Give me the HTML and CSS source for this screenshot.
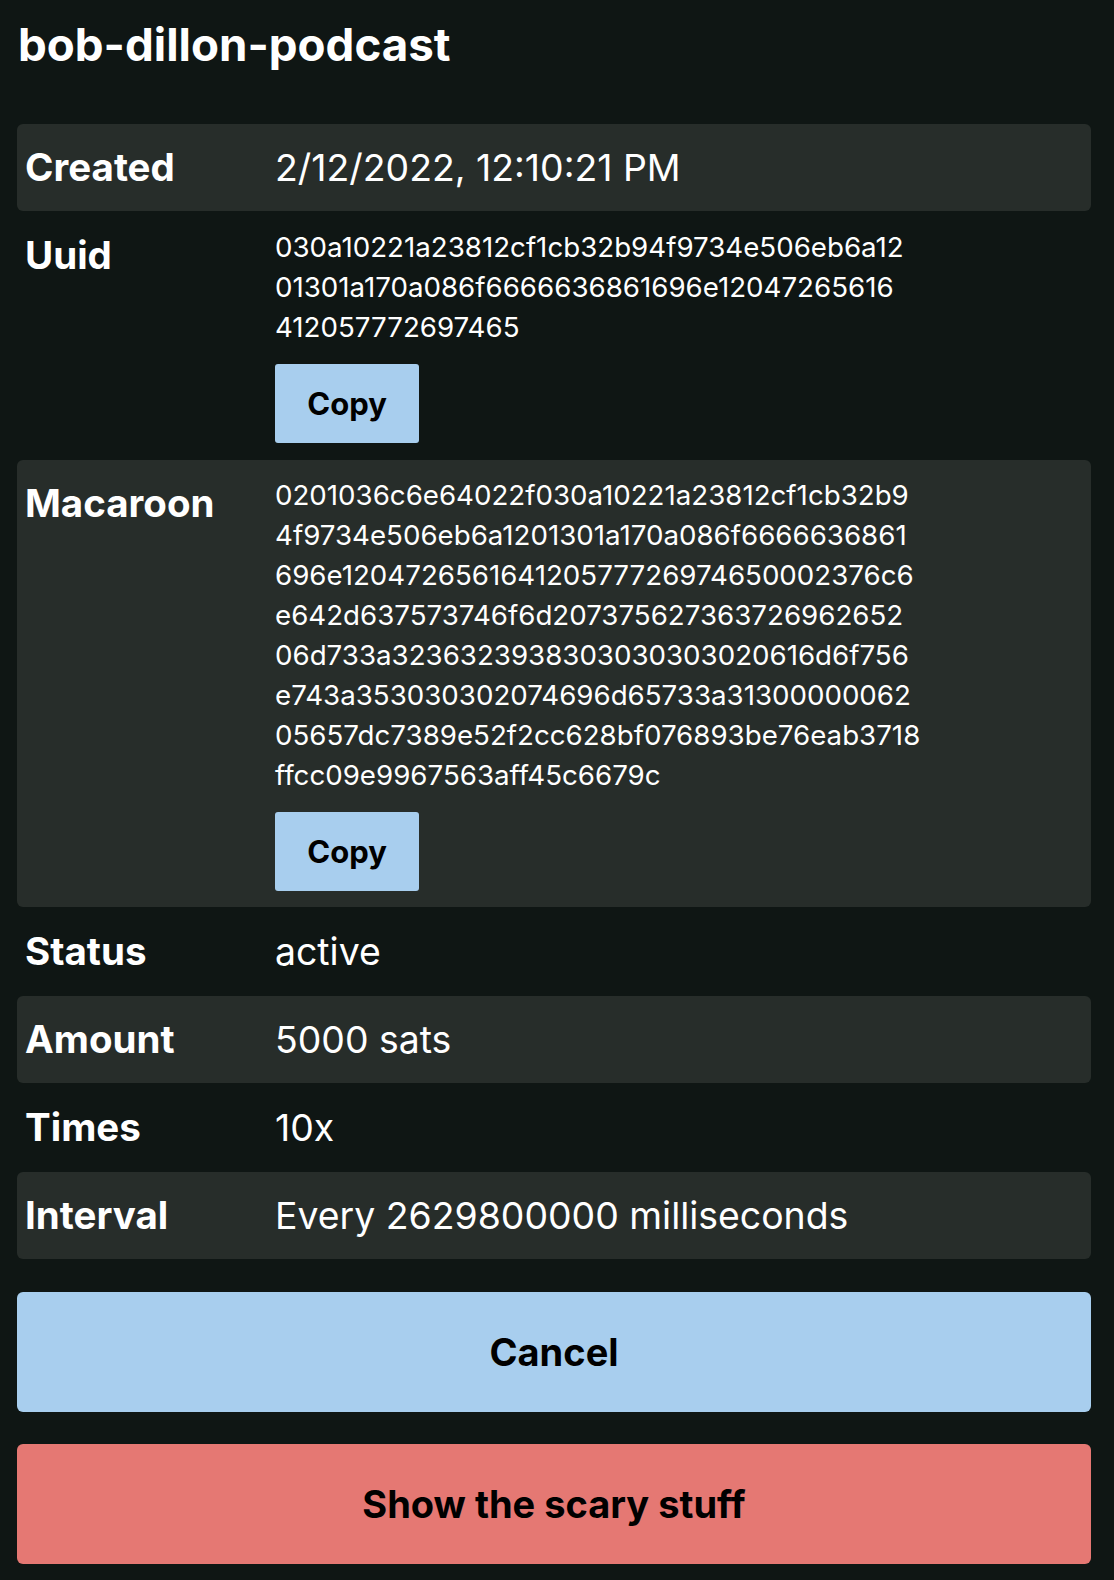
FILE: index.html
```html
<!DOCTYPE html>
<html lang="en">
<head>
<meta charset="utf-8">
<title>bob-dillon-podcast</title>
<link rel="stylesheet" href="styles.css">
</head>
<body>
<main class="page">
  <h1 class="title">bob-dillon-podcast</h1>
  <div class="details">
    <div class="row striped">
      <div class="label">Created</div>
      <div class="value">2/12/2022, 12:10:21 PM</div>
    </div>
    <div class="row">
      <div class="label">Uuid</div>
      <div class="value">
        <div class="hex"><span>030a10221a23812cf1cb32b94f9734e506eb6a12</span><span>01301a170a086f6666636861696e12047265616</span><span>412057772697465</span></div>
        <button class="copy" type="button">Copy</button>
      </div>
    </div>
    <div class="row striped">
      <div class="label">Macaroon</div>
      <div class="value">
        <div class="hex"><span>0201036c6e64022f030a10221a23812cf1cb32b9</span><span>4f9734e506eb6a1201301a170a086f6666636861</span><span>696e120472656164120577726974650002376c6</span><span>e642d637573746f6d207375627363726962652</span><span>06d733a3236323938303030303020616d6f756</span><span>e743a353030302074696d65733a31300000062</span><span>05657dc7389e52f2cc628bf076893be76eab3718</span><span>ffcc09e9967563aff45c6679c</span></div>
        <button class="copy" type="button">Copy</button>
      </div>
    </div>
    <div class="row">
      <div class="label">Status</div>
      <div class="value">active</div>
    </div>
    <div class="row striped">
      <div class="label">Amount</div>
      <div class="value">5000 sats</div>
    </div>
    <div class="row">
      <div class="label">Times</div>
      <div class="value">10x</div>
    </div>
    <div class="row striped">
      <div class="label">Interval</div>
      <div class="value">Every 2629800000 milliseconds</div>
    </div>
  </div>
  <button class="action cancel" type="button">Cancel</button>
  <button class="action scary" type="button">Show the scary stuff</button>
</main>
</body>
</html>
```
FILE: styles.css
```css
html, body {
  margin: 0;
  padding: 0;
  background: #0f1614;
}

body {
  font-family: Inter, "Liberation Sans", sans-serif;
  color: #ffffff;
}

.page {
  width: 1074px;
  margin-left: 17px;
  padding: 17px 0 16px;
}

.title {
  margin: 0 0 51px;
  font-size: 45.7px;
  line-height: 56px;
  font-weight: 700;
  padding-left: 1px;
}

.details {
  display: flex;
  flex-direction: column;
  gap: 1px;
}

.row {
  display: grid;
  grid-template-columns: 250px 1fr;
  align-items: start;
  padding: 16px 8px;
  border-radius: 6px;
}

.row.striped {
  background: #272d2a;
}

.label {
  font-size: 38.5px;
  line-height: 55px;
  font-weight: 700;
}

.value {
  font-size: 37.4px;
  line-height: 55px;
  font-weight: 400;
}

.hex {
  font-size: 27.7px;
  line-height: 40px;
  margin-top: -1px;
}

.hex span {
  display: block;
}

.copy {
  display: block;
  margin-top: 17px;
  width: 144px;
  height: 79px;
  padding: 0;
  border: none;
  border-radius: 3px;
  background: #a8ceee;
  color: #000;
  font-family: Inter, "Liberation Sans", sans-serif;
  font-size: 31px;
  font-weight: 700;
}

.action {
  display: block;
  width: 100%;
  height: 120px;
  border: none;
  border-radius: 6px;
  color: #000;
  font-family: Inter, "Liberation Sans", sans-serif;
  font-size: 38px;
  font-weight: 700;
  padding: 0;
}

.cancel {
  margin-top: 33px;
  background: #a8ceee;
}

.scary {
  margin-top: 32px;
  background: #e57873;
}
```
